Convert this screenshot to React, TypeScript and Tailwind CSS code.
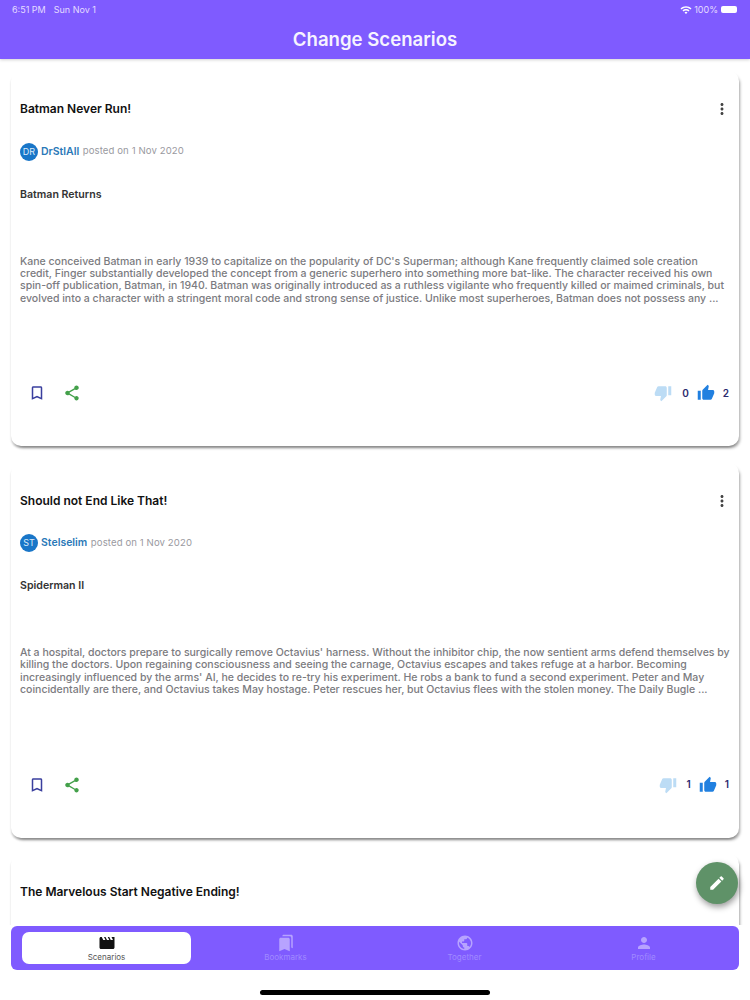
import type React from "react"

const P = {
  more: "M12 8c1.1 0 2-.9 2-2s-.9-2-2-2-2 .9-2 2 .9 2 2 2zm0 2c-1.1 0-2 .9-2 2s.9 2 2 2 2-.9 2-2-.9-2-2-2zm0 6c-1.1 0-2 .9-2 2s.9 2 2 2 2-.9 2-2-.9-2-2-2z",
  bookmark: "M17 3H7c-1.1 0-1.99.9-1.99 2L5 21l7-3 7 3V5c0-1.1-.9-2-2-2zm0 15l-5-2.18L7 18V5h10v13z",
  share: "M18 16.08c-.76 0-1.44.3-1.96.77L8.91 12.7c.05-.23.09-.46.09-.7s-.04-.47-.09-.7l7.05-4.11c.54.5 1.25.81 2.04.81 1.66 0 3-1.34 3-3s-1.34-3-3-3-3 1.34-3 3c0 .24.04.47.09.7L8.04 9.81C7.5 9.31 6.79 9 6 9c-1.66 0-3 1.34-3 3s1.34 3 3 3c.79 0 1.5-.31 2.04-.81l7.12 4.16c-.05.21-.08.43-.08.65 0 1.61 1.31 2.92 2.92 2.92 1.61 0 2.92-1.31 2.92-2.92s-1.31-2.92-2.92-2.92z",
  up: "M1 21h4V9H1v12zm22-11c0-1.1-.9-2-2-2h-6.31l.95-4.57.03-.32c0-.41-.17-.79-.44-1.06L14.17 1 7.59 7.59C7.22 7.95 7 8.45 7 9v10c0 1.1.9 2 2 2h9c.83 0 1.54-.5 1.84-1.22l3.02-7.05c.09-.23.14-.47.14-.73v-2z",
  down: "M15 3H6c-.83 0-1.54.5-1.84 1.22l-3.02 7.05c-.09.23-.14.47-.14.73v2c0 1.1.9 2 2 2h6.31l-.95 4.57-.03.32c0 .41.17.79.44 1.06L9.83 23l6.59-6.59c.36-.36.58-.86.58-1.41V5c0-1.1-.9-2-2-2zm4 0v12h4V3h-4z",
  movie: "M18 4l2 4h-3l-2-4h-2l2 4h-3l-2-4H8l2 4H7L5 4H4c-1.1 0-1.99.9-1.99 2L2 18c0 1.1.9 2 2 2h16c1.1 0 2-.9 2-2V4h-4z",
  books: "M19 18l2 1V3c0-1.1-.9-2-2-2H8.99C7.89 1 7 1.9 7 3h10c1.1 0 2 .9 2 2v13zM15 5H5c-1.1 0-2 .9-2 2v16l7-3 7 3V7c0-1.1-.9-2-2-2z",
  globe: "M12 2C6.48 2 2 6.48 2 12s4.48 10 10 10 10-4.48 10-10S17.52 2 12 2zm-1 17.93c-3.95-.49-7-3.85-7-7.93 0-.62.08-1.21.21-1.79L9 15v1c0 1.1.9 2 2 2v1.93zm6.9-2.54c-.26-.81-1-1.39-1.9-1.39h-1v-3c0-.55-.45-1-1-1H8v-2h2c.55 0 1-.45 1-1V7h2c1.1 0 2-.9 2-2v-.41c2.93 1.19 5 4.06 5 7.41 0 2.08-.8 3.97-2.1 5.39z",
  person: "M12 12c2.21 0 4-1.79 4-4s-1.79-4-4-4-4 1.79-4 4 1.79 4 4 4zm0 2c-2.67 0-8 1.34-8 4v2h16v-2c0-2.66-5.33-4-8-4z",
  edit: "M3 17.25V21h3.75L17.81 9.94l-3.75-3.75L3 17.25zM20.71 7.04c.39-.39.39-1.02 0-1.41l-2.34-2.34c-.39-.39-1.02-.39-1.41 0l-1.83 1.83 3.75 3.75 1.83-1.83z",
  wifi: "M1 9l2 2c5-5 13-5 18 0l2-2C17 3 7 3 1 9zm4 4l2 2c2.8-2.8 7.2-2.8 10 0l2-2c-3.9-3.9-10.1-3.9-14 0zm4 4l3 3 3-3c-1.7-1.7-4.3-1.7-6 0z",
}

const Icon: React.FC<{ d: string; className: string }> = ({ d, className }) => (
  <svg viewBox="0 0 24 24" fill="currentColor" className={className}>
    <path d={d} />
  </svg>
)

interface Scenario {
  title: string
  initials: string
  author: string
  movie: string
  lines: string[]
  dislikes: number
  likes: number
}

const scenarios: Scenario[] = [
  {
    title: "Batman Never Run!",
    initials: "DR",
    author: "DrStlAll",
    movie: "Batman Returns",
    lines: [
      "Kane conceived Batman in early 1939 to capitalize on the popularity of DC's Superman; although Kane frequently claimed sole creation",
      "credit, Finger substantially developed the concept from a generic superhero into something more bat-like. The character received his own",
      "spin-off publication, Batman, in 1940. Batman was originally introduced as a ruthless vigilante who frequently killed or maimed criminals, but",
      "evolved into a character with a stringent moral code and strong sense of justice. Unlike most superheroes, Batman does not possess any ...",
    ],
    dislikes: 0,
    likes: 2,
  },
  {
    title: "Should not End Like That!",
    initials: "ST",
    author: "Stelselim",
    movie: "Spiderman II",
    lines: [
      "At a hospital, doctors prepare to surgically remove Octavius' harness. Without the inhibitor chip, the now sentient arms defend themselves by",
      "killing the doctors. Upon regaining consciousness and seeing the carnage, Octavius escapes and takes refuge at a harbor. Becoming",
      "increasingly influenced by the arms' AI, he decides to re-try his experiment. He robs a bank to fund a second experiment. Peter and May",
      "coincidentally are there, and Octavius takes May hostage. Peter rescues her, but Octavius flees with the stolen money. The Daily Bugle ...",
    ],
    dislikes: 1,
    likes: 1,
  },
  {
    title: "The Marvelous Start Negative Ending!",
    initials: "",
    author: "",
    movie: "",
    lines: [],
    dislikes: 0,
    likes: 0,
  },
]

const Card: React.FC<{ s: Scenario }> = ({ s }) => (
  <article className="h-[375px] shrink-0 rounded-[10px] bg-white px-[9px] shadow-[2px_3px_3px_-1px_rgba(0,0,0,0.36),-1px_3px_2px_-1px_rgba(0,0,0,0.18)]">
    <div className="flex h-[71.5px] items-center justify-between pt-[4.5px]">
      <h2 className="text-[12px] font-semibold text-[#111]">{s.title}</h2>
      <Icon d={P.more} className="mr-[-1px] h-[18px] w-[18px] text-[#444]" />
    </div>
    {s.lines.length > 0 && (
      <>
        <div className="flex h-[18px] items-center text-[9.6px]">
          <span className="flex h-[18px] w-[18px] items-center justify-center rounded-full bg-[#1976c8] text-[9px] text-[#dcebf8]">
            {s.initials}
          </span>
          <span className="ml-[3px] text-[10.5px] font-semibold text-[#2a78b8]">{s.author}</span>
          <span className="ml-[3.5px] tracking-[0.01em] text-[#9a9a9f]">posted on 1 Nov 2020</span>
        </div>
        <div className="mt-[27px] text-[10.6px] font-semibold leading-[14px] text-[#333]">{s.movie}</div>
        <div className="mt-[54px] h-[100px] text-[10.52px] font-medium leading-[12.4px] text-[#7b7b80]">
          {s.lines.map((line) => (
            <div key={line} className="whitespace-nowrap">
              {line}
            </div>
          ))}
        </div>
        <div className="mt-[28.5px] flex items-center justify-between">
          <div className="flex items-center gap-[17px] pl-[8px]">
            <Icon d={P.bookmark} className="h-[18px] w-[18px] text-[#3a3f9e]" />
            <Icon d={P.share} className="h-[18px] w-[18px] text-[#43a04a]" />
          </div>
          <div className="flex items-center text-[10px] font-semibold text-[#2b2a6e]">
            <Icon d={P.down} className="h-[18px] w-[18px] text-[#bcdcf5]" />
            <span className="ml-[10px]">{s.dislikes}</span>
            <Icon d={P.up} className="ml-[8px] h-[18px] w-[18px] text-[#2180e0]" />
            <span className="ml-[8px] mr-[1px]">{s.likes}</span>
          </div>
        </div>
      </>
    )}
  </article>
)

const tabs = [
  { label: "Scenarios", icon: P.movie, active: true },
  { label: "Bookmarks", icon: P.books, active: false },
  { label: "Together", icon: P.globe, active: false },
  { label: "Profile", icon: P.person, active: false },
]

export default function App() {
  return (
    <div className="relative flex h-[1000px] w-[750px] flex-col overflow-hidden bg-white font-['Inter',sans-serif]">
      <header className="relative z-10 h-[59px] shrink-0 bg-[#7f5bff] shadow-[0_1px_3px_rgba(0,0,0,0.18)]">
        <div className="flex h-[19px] items-center justify-between pl-[12px] pr-[13px] text-[9px] text-[#e4dcff]">
          <div className="flex gap-[8px]">
            <span>6:51 PM</span>
            <span>Sun Nov 1</span>
          </div>
          <div className="flex items-center gap-[2px]">
            <Icon d={P.wifi} className="h-[12px] w-[12px] text-white" />
            <span>100%</span>
            <div className="ml-[1px] h-[7px] w-[16px] rounded-[2px] bg-white" />
          </div>
        </div>
        <h1 className="mt-[9px] text-center text-[18.6px] font-semibold leading-[22px] text-[#f6f3ff]">Change Scenarios</h1>
      </header>

      <main className="flex flex-1 flex-col gap-[16.5px] overflow-hidden px-[11px] pt-[12px]">
        {scenarios.map((s) => (
          <Card key={s.title} s={s} />
        ))}
      </main>

      <footer className="h-[75px] shrink-0 px-[11px] pt-px">
        <nav className="grid h-[44px] grid-cols-4 rounded-[6px] bg-[#7f5bff] px-[6px] py-[6px]">
          {tabs.map((t) => (
            <div
              key={t.label}
              className={
                t.active
                  ? "mx-[5px] flex flex-col items-center rounded-[7px] bg-white pt-[2px] text-[#555]"
                  : "flex flex-col items-center pt-[2px] text-[#a08aff]"
              }
            >
              <Icon d={t.icon} className={t.active ? "h-[18px] w-[18px] text-[#111]" : "h-[18px] w-[18px] text-[#b7a3ff]"} />
              <span className="text-[8px] leading-[10px]">{t.label}</span>
            </div>
          ))}
        </nav>
        <div className="mx-auto mt-[20px] h-[5px] w-[230px] rounded-full bg-black" />
      </footer>

      <button className="absolute left-[696px] top-[862px] z-20 flex h-[42px] w-[42px] items-center justify-center rounded-full bg-[#5f9268] shadow-[1px_3px_6px_rgba(0,0,0,0.4)]">
        <Icon d={P.edit} className="h-[18px] w-[18px] text-white" />
      </button>
    </div>
  )
}
